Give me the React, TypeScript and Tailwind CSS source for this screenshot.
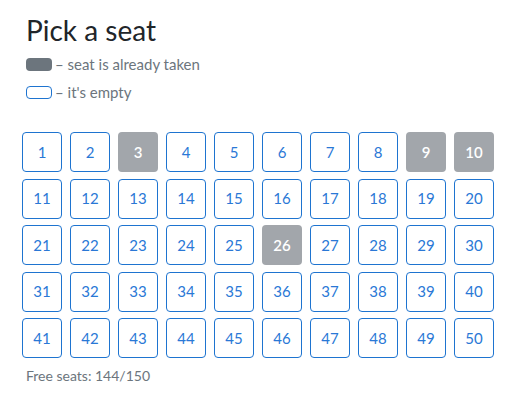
import React from 'react';

const taken = [3, 9, 10, 26];

export default function App() {
  const seats = Array.from({ length: 50 }, (_, i) => i + 1);

  return (
    <div className="w-[525px] h-[404px] bg-white font-['Lato','Liberation_Sans',sans-serif] pt-[12px] pl-[22px]">
      <h1 className="pl-[4px] text-[28px] leading-[36px] text-[#212529]">Pick a seat</h1>

      {/* Legend */}
      <div className="mt-[6px] pl-[4px] flex flex-col gap-[8px] text-[15px] text-[#6c757d]">
        <div className="flex items-center h-[20px]">
          <span className="w-[26px] h-[13px] rounded-[4px] bg-[#6c757d]" />
          <span className="ml-[3px]">– seat is already taken</span>
        </div>
        <div className="flex items-center h-[20px]">
          <span className="w-[26px] h-[13px] rounded-[4px] border border-[#1e74d0]" />
          <span className="ml-[3px]">– it's empty</span>
        </div>
      </div>

      {/* Seats */}
      <div className="mt-[30px] grid grid-cols-[repeat(10,40px)] gap-x-[8px] gap-y-[6.5px]">
        {seats.map(n =>
          taken.includes(n) ? (
            <button
              key={n}
              disabled
              className="w-[40px] h-[40px] rounded-[4px] bg-[#a2a6ab] text-white text-[15px] font-semibold"
            >
              {n}
            </button>
          ) : (
            <button
              key={n}
              className="w-[40px] h-[40px] rounded-[4px] border border-[#1e74d0] text-[#2a78d6] text-[15px]"
            >
              {n}
            </button>
          )
        )}
      </div>

      <p className="mt-[7px] pl-[4px] text-[14px] text-[#6c757d]">Free seats: 144/150</p>
    </div>
  );
}
